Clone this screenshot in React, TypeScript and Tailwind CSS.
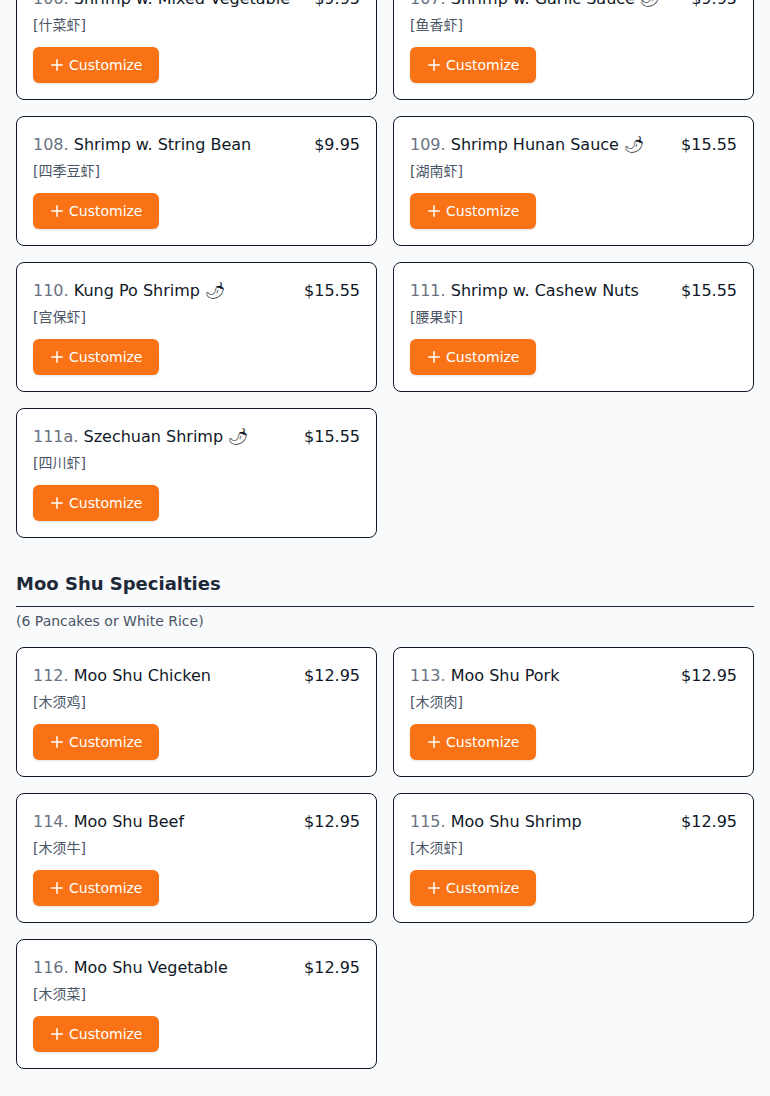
import { Plus } from "lucide-react";

type Item = {
  num: string;
  name: string;
  zh: string;
  price: string;
  spicy?: boolean;
};

const shrimp: Item[] = [
  { num: "106.", name: "Shrimp w. Mixed Vegetable", zh: "什菜虾", price: "$9.95" },
  { num: "107.", name: "Shrimp w. Garlic Sauce", zh: "鱼香虾", price: "$9.95", spicy: true },
  { num: "108.", name: "Shrimp w. String Bean", zh: "四季豆虾", price: "$9.95" },
  { num: "109.", name: "Shrimp Hunan Sauce", zh: "湖南虾", price: "$15.55", spicy: true },
  { num: "110.", name: "Kung Po Shrimp", zh: "宫保虾", price: "$15.55", spicy: true },
  { num: "111.", name: "Shrimp w. Cashew Nuts", zh: "腰果虾", price: "$15.55" },
  { num: "111a.", name: "Szechuan Shrimp", zh: "四川虾", price: "$15.55", spicy: true },
];

const mooShu: Item[] = [
  { num: "112.", name: "Moo Shu Chicken", zh: "木须鸡", price: "$12.95" },
  { num: "113.", name: "Moo Shu Pork", zh: "木须肉", price: "$12.95" },
  { num: "114.", name: "Moo Shu Beef", zh: "木须牛", price: "$12.95" },
  { num: "115.", name: "Moo Shu Shrimp", zh: "木须虾", price: "$12.95" },
  { num: "116.", name: "Moo Shu Vegetable", zh: "木须菜", price: "$12.95" },
];

function MenuCard({ item }: { item: Item }) {
  return (
    <div className="rounded-lg border border-gray-900 bg-white p-4">
      <div className="flex items-start justify-between gap-3 text-base leading-6">
        <div className="text-gray-900">
          <span className="text-gray-500">{item.num}</span> {item.name}
          {item.spicy && <span> 🌶</span>}
        </div>
        <div className="whitespace-nowrap text-gray-900">{item.price}</div>
      </div>
      <div className="mt-1 text-sm leading-5 text-gray-600">[{item.zh}]</div>
      <button
        type="button"
        className="mt-3 flex h-9 items-center gap-[3px] rounded-md bg-[#f97316] pl-[15px] pr-4 text-sm text-white shadow-sm"
      >
        <Plus className="h-[18px] w-[18px]" strokeWidth={2} />
        Customize
      </button>
    </div>
  );
}

export default function App() {
  return (
    <div
      className="min-h-screen bg-gray-50 px-4 pb-7"
      style={{ fontFamily: '"DejaVu Sans", "Noto Sans CJK SC", sans-serif' }}
    >
      <div className="-mt-[30px] grid grid-cols-2 gap-4">
        {shrimp.map((item) => (
          <MenuCard key={item.num} item={item} />
        ))}
      </div>

      <section className="mt-8">
        <h2 className="border-b border-gray-800 pb-2 text-lg font-bold leading-7 text-gray-800">
          Moo Shu Specialties
        </h2>
        <p className="mt-1 text-sm leading-5 text-gray-600">(6 Pancakes or White Rice)</p>
        <div className="mt-4 grid grid-cols-2 gap-4">
          {mooShu.map((item) => (
            <MenuCard key={item.num} item={item} />
          ))}
        </div>
      </section>
    </div>
  );
}
